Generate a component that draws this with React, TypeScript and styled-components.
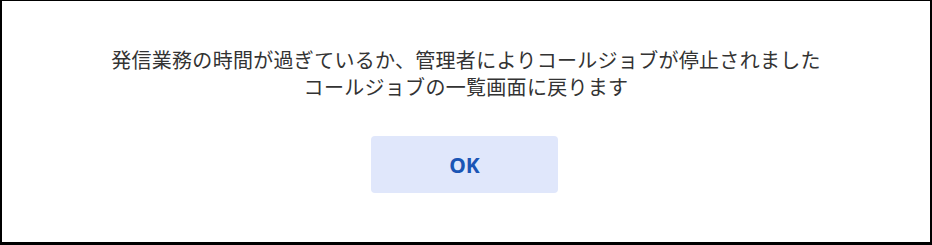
import React from "react";
import styled, { createGlobalStyle } from "styled-components";

const GlobalStyle = createGlobalStyle`
	html, body {
		margin: 0;
		padding: 0;
		background: #fff;
	}
	body {
		font-family: "Noto Sans CJK JP", "Noto Sans", sans-serif;
	}
`;

const App = () => {
	return (
		<>
			<GlobalStyle />
			<Dialog>
				<Message>
					<Line>発信業務の時間が過ぎているか、管理者によりコールジョブが停止されました</Line>
					<Line>コールジョブの一覧画面に戻ります</Line>
				</Message>
				<Actions>
					<OkButton type="button">OK</OkButton>
				</Actions>
			</Dialog>
		</>
	);
};

export default App;

const Dialog = styled.div`
	box-sizing: border-box;
	width: 932px;
	height: 245px;
	border: 2px solid #000;
	border-top-width: 1px;
	border-bottom-width: 3px;
	background: #fff;
	display: flex;
	flex-direction: column;
	align-items: center;
	padding-top: 45px;
`;

const Message = styled.div`
	display: flex;
	flex-direction: column;
	align-items: center;
	color: #333;
	font-size: 20px;
	line-height: 27px;
	letter-spacing: 0.3px;
`;

const Line = styled.span`
	white-space: nowrap;
`;

const Actions = styled.div`
	display: flex;
	justify-content: center;
	margin-top: 36px;
`;

const OkButton = styled.button`
	width: 187px;
	height: 57px;
	margin-left: -3px;
	border: none;
	border-radius: 4px;
	background: #e0e7fb;
	color: #1a55b5;
	font-family: "Noto Sans", "Liberation Sans", sans-serif;
	font-weight: 700;
	font-size: 21px;
	cursor: pointer;
	padding: 0;
`;
